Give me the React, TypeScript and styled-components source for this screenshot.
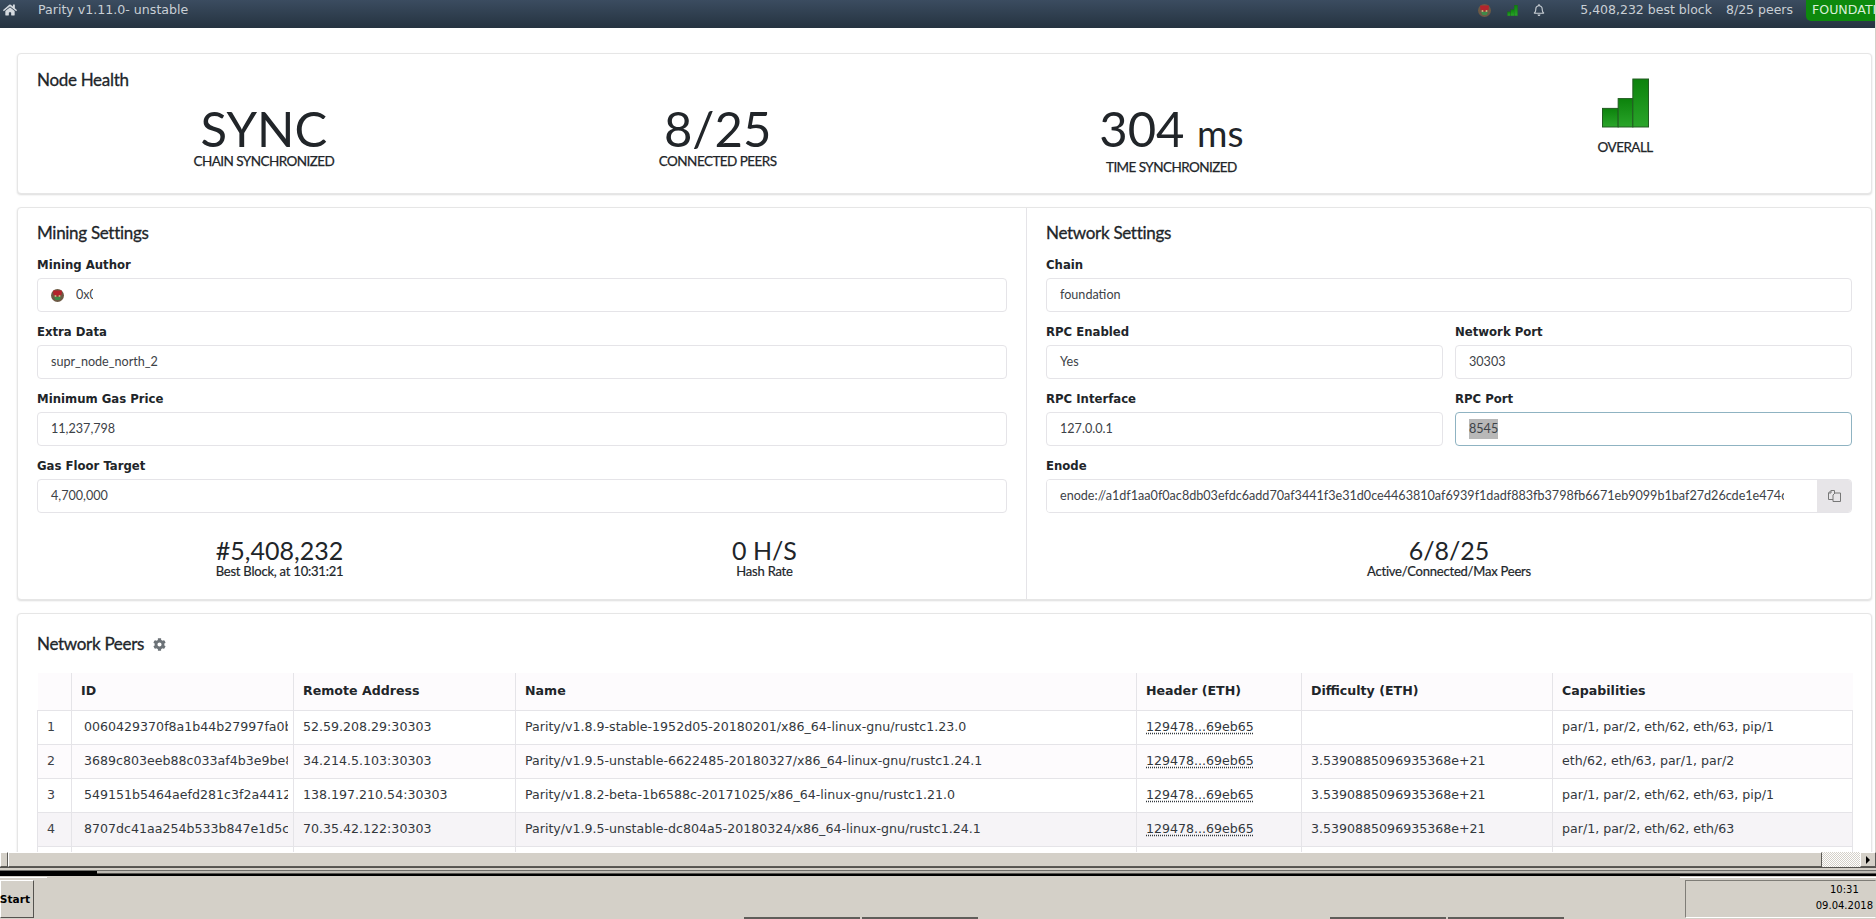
import React from "react"
import styled, { createGlobalStyle } from "styled-components"
import { FaHome, FaCog, FaRegBell } from "react-icons/fa"

const GlobalStyle = createGlobalStyle`
    html, body {
        margin: 0;
        padding: 0;
        overflow: hidden;
        background: #d4d0c8;
    }
    * {
        box-sizing: border-box;
    }
`

const ui = `"DejaVu Sans", sans-serif`
const head = `Lato, "Open Sans", sans-serif`
const ink = '#212529'
const line = '#e5e4e8'

const peers = [
    { id: '0060429370f8a1b44b27997fa0b', address: '52.59.208.29:30303', name: 'Parity/v1.8.9-stable-1952d05-20180201/x86_64-linux-gnu/rustc1.23.0', difficulty: '', caps: 'par/1, par/2, eth/62, eth/63, pip/1' },
    { id: '3689c803eeb88c033af4b3e9be8', address: '34.214.5.103:30303', name: 'Parity/v1.9.5-unstable-6622485-20180327/x86_64-linux-gnu/rustc1.24.1', difficulty: '3.5390885096935368e+21', caps: 'eth/62, eth/63, par/1, par/2' },
    { id: '549151b5464aefd281c3f2a4412', address: '138.197.210.54:30303', name: 'Parity/v1.8.2-beta-1b6588c-20171025/x86_64-linux-gnu/rustc1.21.0', difficulty: '3.5390885096935368e+21', caps: 'par/1, par/2, eth/62, eth/63, pip/1' },
    { id: '8707dc41aa254b533b847e1d5c', address: '70.35.42.122:30303', name: 'Parity/v1.9.5-unstable-dc804a5-20180324/x86_64-linux-gnu/rustc1.24.1', difficulty: '3.5390885096935368e+21', caps: 'par/1, par/2, eth/62, eth/63' },
]

const Page = styled.div`
    width: 1876px;
    height: 919px;
    display: flex;
    flex-direction: column;
    overflow: hidden;
    background: #d4d0c8;
`
const Viewport = styled.div`
    height: 852px;
    flex: none;
    overflow: hidden;
    background: #fff;
    border-right: 1px solid #d4d0c8;
`
const TopBar = styled.header`
    height: 28px;
    display: flex;
    align-items: flex-start;
    background: linear-gradient(#3b4c60, #253340);
    color: #c9cfd5;
    font: 12.6px/20px ${ui};
    overflow: hidden;
`
const HomeLink = styled.span`
    width: 38px;
    padding: 3px 0 0 3px;
    font-size: 14px;
    line-height: 14px;
    color: #d5dadf;
`
const Spacer = styled.div`
    flex: 1;
`
const TopIcon = styled.span<{ $w: number }>`
    width: ${p => p.$w}px;
    height: 20px;
    display: flex;
    align-items: center;
    justify-content: center;
    flex: none;
`
const TopStat = styled.span<{ $left?: number; $gap: number }>`
    margin-left: ${p => p.$left ?? 0}px;
    margin-right: ${p => p.$gap}px;
    font-size: 12.5px;
    white-space: nowrap;
`
const ChainBadge = styled.span`
    width: 69px;
    height: 21px;
    padding-left: 6px;
    overflow: hidden;
    white-space: nowrap;
    background: #0d890d;
    color: #d8efd8;
    border-radius: 0 0 0 5px;
    flex: none;
`
const Content = styled.main`
    padding: 25px 3px 0 17px;
    display: flex;
    flex-direction: column;
    gap: 13px;
`
const Card = styled.section`
    background: #fff;
    border: 1px solid #e6e6e6;
    border-radius: 4px;
    box-shadow: 0 1px 2px rgba(0, 0, 0, 0.14);
`
const HealthCard = styled(Card)`
    height: 141px;
    padding: 14px 19px 0;
`
const CardTitle = styled.h2`
    margin: 0;
    font: 400 17px/24px ${head};
    letter-spacing: -0.3px;
    -webkit-text-stroke: 0.3px ${ink};
    color: ${ink};
    display: flex;
    align-items: center;
    gap: 9px;
`
const HealthGrid = styled.div`
    margin-top: -14px;
    display: grid;
    grid-template-columns: repeat(4, 1fr);
    text-align: center;
    color: ${ink};
`
const HealthItem = styled.div`
    display: flex;
    flex-direction: column;
    align-items: center;
`
const BigValue = styled.div`
    margin-top: 26px;
    font: 400 49px/48px ${head};
`
const BigUnit = styled.span`
    font-size: 37px;
`
const HealthLabel = styled.div<{ $shift?: number }>`
    margin-top: ${p => p.$shift ?? 0}px;
    font: 400 13.5px/18px ${head};
    letter-spacing: -0.55px;
    -webkit-text-stroke: 0.25px ${ink};
`
const SettingsCard = styled(Card)`
    height: 393px;
    display: grid;
    grid-template-columns: 1009px minmax(0, 1fr);
`
const SettingsPane = styled.div<{ $divided?: boolean }>`
    padding: 13px 19px 0;
    border-right: ${p => p.$divided ? `1px solid ${line}` : 'none'};
    display: flex;
    flex-direction: column;
    min-width: 0;
`
const PaneTitle = styled(CardTitle)`
    margin-bottom: 7px;
`
const TwoCols = styled.div`
    display: grid;
    grid-template-columns: repeat(2, minmax(0, 1fr));
    gap: 12px;
`
const Field = styled.div`
    height: 67px;
`
const Label = styled.div`
    font: bold 11.7px/24px ${ui};
    color: ${ink};
    height: 26px;
    padding-top: 1px;
`
const Input = styled.div<{ $focus?: boolean }>`
    height: 34px;
    display: flex;
    align-items: center;
    padding: 0 13px;
    border: 1px solid ${p => p.$focus ? '#8fb3c2' : line};
    border-radius: 4px;
    background: #fff;
    font: 12.6px/20px ${head};
    color: #3d4247;
    white-space: nowrap;
    overflow: hidden;
`
const Selected = styled.span`
    background: #b8b8b8;
`
const Identicon = styled.span`
    width: 13px;
    height: 13px;
    margin-right: 12px;
    flex: none;
`
const ClippedValue = styled.span<{ $w: number }>`
    display: block;
    width: ${p => p.$w}px;
    overflow: hidden;
`
const InputGroup = styled.div`
    height: 34px;
    display: flex;
    border: 1px solid ${line};
    border-radius: 4px;
    overflow: hidden;
`
const GroupValue = styled(Input)`
    flex: 1;
    min-width: 0;
    border: none;
    border-radius: 0;
    padding-right: 33px;
    display: block;
    line-height: 32px;
`
const GroupText = styled.span`
    display: block;
    overflow: hidden;
`
const CopyButton = styled.span`
    width: 34px;
    flex: none;
    display: flex;
    align-items: center;
    justify-content: center;
    background: #e7e5e8;
    color: #777;
`
const Stats = styled.div<{ $cols: number }>`
    margin-top: 16px;
    display: grid;
    grid-template-columns: repeat(${p => p.$cols}, 1fr);
    text-align: center;
    color: ${ink};
`
const StatValue = styled.div`
    font: 400 25px/28px ${head};
`
const StatLabel = styled.div`
    margin-top: -1px;
    font: 400 13px/16px ${head};
    letter-spacing: -0.22px;
    -webkit-text-stroke: 0.2px ${ink};
`
const PeersCard = styled(Card)`
    padding: 18px 19px 0;
    height: 260px;
`
const GearIcon = styled.span`
    display: flex;
    color: #6c7277;
    font-size: 13px;
    -webkit-text-stroke: 0;
`
const PeersTable = styled.table`
    margin-top: 17px;
    width: 1815px;
    table-layout: fixed;
    border-collapse: collapse;
    font: 12.6px/16px ${ui};
    color: #33383d;
`
const HeadCell = styled.th`
    height: 37px;
    padding: 0 9px;
    text-align: left;
    font-weight: bold;
    color: ${ink};
    background: #fdfbfd;
    border-left: 1px solid ${line};
    border-bottom: 1px solid ${line};
    &:first-child {
        border-left: none;
    }
`
const Row = styled.tr<{ $tone: string }>`
    background: ${p => p.$tone};
`
const Cell = styled.td`
    height: 34px;
    padding: 0 9px 1px;
    border: 1px solid ${line};
    white-space: nowrap;
    overflow: hidden;
    &:first-child {
        color: #3d4247;
    }
`
const IdCell = styled(Cell)`
    padding-left: 12px;
    padding-right: 5px;
`
const IdText = styled.span`
    display: block;
    overflow: hidden;
`
const HeaderLink = styled.span`
    text-decoration: underline dotted;
    text-underline-offset: 2px;
`
const HScrollbar = styled.div`
    height: 15px;
    flex: none;
    display: flex;
    background: #d4d0c8;
`
const ScrollEnd = styled.div<{ $w: number }>`
    width: ${p => p.$w}px;
    flex: none;
    display: flex;
    align-items: center;
    justify-content: center;
    background: #d4d0c8;
    border: 1px solid;
    border-color: #fff #5a5955 #5a5955 #fff;
`
const ScrollThumb = styled.div`
    flex: 1;
    background: #d4d0c8;
    border: 1px solid;
    border-color: #fff #5a5955 #5a5955 #fff;
`
const ScrollTrack = styled.div`
    width: 38px;
    flex: none;
    background: repeating-conic-gradient(#fff 0 25%, #d4d0c8 0 50%) 0 0 / 2px 2px;
`
const ScrollArrow = styled.span`
    width: 0;
    height: 0;
    border-top: 4px solid transparent;
    border-bottom: 4px solid transparent;
    border-left: 4px solid #000;
`
const FrameEdge = styled.div`
    height: 9px;
    flex: none;
    position: relative;
    background: linear-gradient(#55534f 0 1px, #d4d0c8 1px 3px, #6f6e6a 3px 4px, #bdbab3 4px 6px, #55534f 6px 7px, #000 7px 9px);
`
const FrameMark = styled.div`
    position: absolute;
    left: 0;
    top: 4px;
    width: 97px;
    height: 3px;
    background: #000;
`
const Taskbar = styled.footer`
    flex: 1;
    padding-top: 4px;
    display: flex;
    position: relative;
    font: 11px/14px ${ui};
    color: #000;
`
const TopHighlight = styled.div<{ $side: 'left' | 'right'; $w: number }>`
    position: absolute;
    top: 1px;
    ${p => p.$side}: 0;
    width: ${p => p.$w}px;
    height: 1px;
    background: #fff;
`
const StartButton = styled.div`
    width: 34px;
    height: 38px;
    display: flex;
    align-items: center;
    justify-content: flex-end;
    padding-right: 3px;
    font-weight: bold;
    font-size: 10.6px;
    border: 1px solid;
    border-color: #fff #55534f #55534f #fff;
`
const TaskSlots = styled.div`
    flex: 1;
    align-self: flex-end;
    padding-left: 710px;
    display: flex;
    gap: 2px;
`
const TaskSlot = styled.div<{ $after?: number }>`
    width: 116px;
    height: 2px;
    background: #5f5e5a;
    margin-right: ${p => p.$after ?? 0}px;
`
const Clock = styled.div`
    width: 191px;
    height: 38px;
    padding: 1px 2px 0 0;
    text-align: right;
    font-size: 10px;
    line-height: 16px;
    flex: none;
    border: 1px solid;
    border-color: #7f7d77 #d4d0c8 #fff #7f7d77;
`
const ClockText = styled.div`
    display: inline-block;
    text-align: center;
`

const Bars: React.FC<{ w: number; h: number }> = ({ w, h }) => (
    <svg width={w} height={h} viewBox="0 0 48 50">
        <defs>
            <linearGradient id="bar" x1="0" y1="0" x2="0" y2="1">
                <stop offset="0" stopColor="#0c820c" />
                <stop offset="1" stopColor="#2aa52a" />
            </linearGradient>
        </defs>
        <g fill="url(#bar)" stroke="#205a20" strokeWidth="1">
            <rect x="0.5" y="30.5" width="16" height="19" />
            <rect x="16.5" y="20.5" width="15" height="29" />
            <rect x="31.5" y="0.5" width="16" height="49" />
        </g>
    </svg>
)

const Face: React.FC<{ size: number }> = ({ size }) => (
    <svg width={size} height={size} viewBox="0 0 13 13" style={{ display: 'block' }}>
        <circle cx="6.5" cy="6.5" r="6.5" fill="#6d5a45" />
        <path d="M2 1.5 L11 1.5 L10.5 6 L6.5 7.5 L2.5 6 Z" fill="#b3242c" />
        <path d="M3 8 L10 8 L8.5 11 L4.5 11 Z" fill="#3f8a4a" />
        <circle cx="4.5" cy="7" r="1" fill="#c9b27a" />
        <circle cx="8.5" cy="7" r="1" fill="#c9b27a" />
    </svg>
)

const CopyIcon: React.FC = () => (
    <svg width="13" height="12" viewBox="0 0 13 12" fill="none" stroke="currentColor" strokeWidth="1">
        <path d="M5 9.5 H0.5 V3 L3 0.5 H6.5 V3" />
        <path d="M0.5 3 H3 V0.5" />
        <path d="M5 11.5 V5 L7 3 H12.5 V11.5 Z" />
    </svg>
)

const App: React.FC = (): JSX.Element => {
    return (
        <Page>
            <GlobalStyle />
            <Viewport>
                <TopBar>
                    <HomeLink><FaHome /></HomeLink>
                    <span>Parity v1.11.0- unstable</span>
                    <Spacer />
                    <TopIcon $w={18}><Face size={13} /></TopIcon>
                    <TopIcon $w={38}><Bars w={11} h={11} /></TopIcon>
                    <TopIcon $w={16}><FaRegBell size={12} /></TopIcon>
                    <TopStat $left={33} $gap={14}>5,408,232 best block</TopStat>
                    <TopStat $gap={13}>8/25 peers</TopStat>
                    <ChainBadge>FOUNDATION</ChainBadge>
                </TopBar>
                <Content>
                    <HealthCard>
                        <CardTitle>Node Health</CardTitle>
                        <HealthGrid>
                            <HealthItem>
                                <BigValue>SYNC</BigValue>
                                <HealthLabel>CHAIN SYNCHRONIZED</HealthLabel>
                            </HealthItem>
                            <HealthItem>
                                <BigValue>8/25</BigValue>
                                <HealthLabel>CONNECTED PEERS</HealthLabel>
                            </HealthItem>
                            <HealthItem>
                                <BigValue>304 <BigUnit>ms</BigUnit></BigValue>
                                <HealthLabel $shift={1}>TIME SYNCHRONIZED</HealthLabel>
                            </HealthItem>
                            <HealthItem>
                                <Bars w={47} h={50} />
                                <HealthLabel $shift={10}>OVERALL</HealthLabel>
                            </HealthItem>
                        </HealthGrid>
                    </HealthCard>

                    <SettingsCard>
                        <SettingsPane $divided>
                            <PaneTitle>Mining Settings</PaneTitle>
                            <Field>
                                <Label>Mining Author</Label>
                                <Input>
                                    <Identicon><Face size={13} /></Identicon>
                                    <ClippedValue $w={17}>0x00427feae</ClippedValue>
                                </Input>
                            </Field>
                            <Field>
                                <Label>Extra Data</Label>
                                <Input>supr_node_north_2</Input>
                            </Field>
                            <Field>
                                <Label>Minimum Gas Price</Label>
                                <Input>11,237,798</Input>
                            </Field>
                            <Field>
                                <Label>Gas Floor Target</Label>
                                <Input>4,700,000</Input>
                            </Field>
                            <Stats $cols={2}>
                                <div>
                                    <StatValue>#5,408,232</StatValue>
                                    <StatLabel>Best Block, at 10:31:21</StatLabel>
                                </div>
                                <div>
                                    <StatValue>0 H/S</StatValue>
                                    <StatLabel>Hash Rate</StatLabel>
                                </div>
                            </Stats>
                        </SettingsPane>
                        <SettingsPane>
                            <PaneTitle>Network Settings</PaneTitle>
                            <Field>
                                <Label>Chain</Label>
                                <Input>foundation</Input>
                            </Field>
                            <TwoCols>
                                <Field>
                                    <Label>RPC Enabled</Label>
                                    <Input>Yes</Input>
                                </Field>
                                <Field>
                                    <Label>Network Port</Label>
                                    <Input>30303</Input>
                                </Field>
                            </TwoCols>
                            <TwoCols>
                                <Field>
                                    <Label>RPC Interface</Label>
                                    <Input>127.0.0.1</Input>
                                </Field>
                                <Field>
                                    <Label>RPC Port</Label>
                                    <Input $focus><Selected>8545</Selected></Input>
                                </Field>
                            </TwoCols>
                            <Field>
                                <Label>Enode</Label>
                                <InputGroup>
                                    <GroupValue><GroupText>enode://a1df1aa0f0ac8db03efdc6add70af3441f3e31d0ce4463810af6939f1dadf883fb3798fb6671eb9099b1baf27d26cde1e474c</GroupText></GroupValue>
                                    <CopyButton><CopyIcon /></CopyButton>
                                </InputGroup>
                            </Field>
                            <Stats $cols={1}>
                                <div>
                                    <StatValue>6/8/25</StatValue>
                                    <StatLabel>Active/Connected/Max Peers</StatLabel>
                                </div>
                            </Stats>
                        </SettingsPane>
                    </SettingsCard>

                    <PeersCard>
                        <CardTitle>Network Peers <GearIcon><FaCog /></GearIcon></CardTitle>
                        <PeersTable>
                            <colgroup>
                                <col width={34} />
                                <col width={222} />
                                <col width={222} />
                                <col width={621} />
                                <col width={165} />
                                <col width={251} />
                                <col width={300} />
                            </colgroup>
                            <thead>
                                <tr>
                                    <HeadCell />
                                    <HeadCell>ID</HeadCell>
                                    <HeadCell>Remote Address</HeadCell>
                                    <HeadCell>Name</HeadCell>
                                    <HeadCell>Header (ETH)</HeadCell>
                                    <HeadCell>Difficulty (ETH)</HeadCell>
                                    <HeadCell>Capabilities</HeadCell>
                                </tr>
                            </thead>
                            <tbody>
                                {peers.map((peer, i) => (
                                    <Row key={peer.id} $tone={i === 3 ? '#f6f4f7' : i % 2 ? '#fdfbfd' : '#fff'}>
                                        <Cell>{i + 1}</Cell>
                                        <IdCell><IdText>{peer.id}</IdText></IdCell>
                                        <Cell>{peer.address}</Cell>
                                        <Cell>{peer.name}</Cell>
                                        <Cell><HeaderLink>129478...69eb65</HeaderLink></Cell>
                                        <Cell>{peer.difficulty}</Cell>
                                        <Cell>{peer.caps}</Cell>
                                    </Row>
                                ))}
                                <Row $tone="#fff">
                                    <Cell /><Cell /><Cell /><Cell /><Cell /><Cell /><Cell />
                                </Row>
                            </tbody>
                        </PeersTable>
                    </PeersCard>
                </Content>
            </Viewport>

            <HScrollbar>
                <ScrollEnd $w={8} />
                <ScrollThumb />
                <ScrollTrack />
                <ScrollEnd $w={16}><ScrollArrow /></ScrollEnd>
            </HScrollbar>
            <FrameEdge><FrameMark /></FrameEdge>
            <Taskbar>
                <TopHighlight $side="left" $w={47} />
                <TopHighlight $side="right" $w={196} />
                <StartButton>Start</StartButton>
                <TaskSlots>
                    <TaskSlot />
                    <TaskSlot $after={350} />
                    <TaskSlot />
                    <TaskSlot />
                </TaskSlots>
                <Clock><ClockText>10:31<br />09.04.2018</ClockText></Clock>
            </Taskbar>
        </Page>
    )
}

export default App
